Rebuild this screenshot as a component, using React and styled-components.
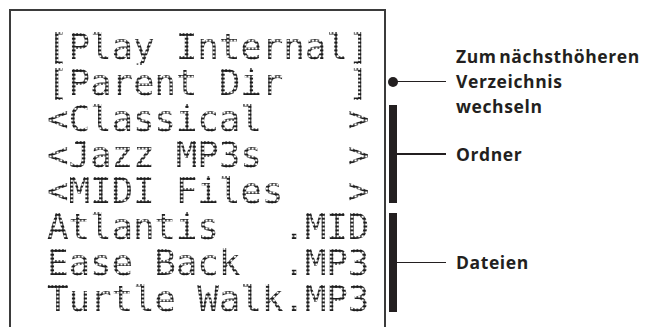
import { createGlobalStyle, styled } from "styled-components";

const GlobalStyle = createGlobalStyle`
  html, body {
    margin: 0;
    padding: 0;
    background: #fff;
  }
  body {
    width: 647px;
    height: 327px;
    overflow: hidden;
  }
`;

// whole figure: the display on the left, callouts on the right
const Page = styled.div`
  display: flex;
  align-items: flex-start;
  box-sizing: border-box;
  width: 647px;
  height: 327px;
  padding: 9px 0 0 9px;
  overflow: hidden;
`;

// the LCD window, its bottom edge runs off the picture
const Screen = styled.div`
  box-sizing: border-box;
  flex: none;
  width: 377px;
  height: 340px;
  border: 2px solid #3b3b3b;
  border-bottom: none;
  padding: 17.5px 0 0 36px;
`;

// one 16 char line, the dot grid mask gives the 5x7 matrix look
const LcdLine = styled.div`
  font-family: "DejaVu Sans Mono", monospace;
  font-size: 36px;
  line-height: 36px;
  letter-spacing: -0.2px;
  white-space: pre;
  color: #1a1a1a;
  -webkit-mask-image: radial-gradient(circle, #000 1.4px, transparent 1.8px);
  mask-image: radial-gradient(circle, #000 1.4px, transparent 1.8px);
  -webkit-mask-size: 3.55px 3.9px;
  mask-size: 3.55px 3.9px;
`;

const Callouts = styled.div`
  display: flex;
  flex-direction: column;
  margin: 67px 0 0 2px;
`;

const Callout = styled.div`
  display: flex;
  align-items: center;
  height: ${({ $h }) => $h}px;
  margin-top: ${({ $gap }) => $gap || 0}px;
`;

const Slot = styled.div`
  display: flex;
  align-items: center;
  width: 10px;
  height: 100%;
`;

const Dot = styled.div`
  width: 10px;
  height: 10px;
  border-radius: 50%;
  background: #231f20;
`;

const Bar = styled.div`
  width: 8px;
  height: 100%;
  margin-left: 1px;
  background: #231f20;
`;

const Connector = styled.div`
  width: 50px;
  height: 1.5px;
  margin-left: -2px;
  background: #231f20;
`;

const Label = styled.div`
  margin-left: 10px;
  font-family: "Open Sans", "Liberation Sans", sans-serif;
  font-weight: 700;
  font-size: 17.5px;
  line-height: 25px;
  letter-spacing: 0.6px;
  word-spacing: -2.5px;
  color: #231f20;
  white-space: nowrap;
`;

const lines = [
  "[Play Internal]",
  "[Parent Dir   ]",
  "<Classical    >",
  "<Jazz MP3s    >",
  "<MIDI Files   >",
  "Atlantis   .MID",
  "Ease Back  .MP3",
  "Turtle Walk.MP3",
];

export default function App() {
  return (
    <>
      <GlobalStyle />
      <Page>
        <Screen>
          {lines.map((line) => (
            <LcdLine key={line}>{line}</LcdLine>
          ))}
        </Screen>
        <Callouts>
          <Callout $h={11}>
            <Slot>
              <Dot />
            </Slot>
            <Connector />
            <Label>
              Zum nächsthöheren
              <br />
              Verzeichnis
              <br />
              wechseln
            </Label>
          </Callout>
          <Callout $h={98} $gap={18}>
            <Slot>
              <Bar />
            </Slot>
            <Connector />
            <Label>Ordner</Label>
          </Callout>
          <Callout $h={99} $gap={10}>
            <Slot>
              <Bar />
            </Slot>
            <Connector />
            <Label>Dateien</Label>
          </Callout>
        </Callouts>
      </Page>
    </>
  );
}
